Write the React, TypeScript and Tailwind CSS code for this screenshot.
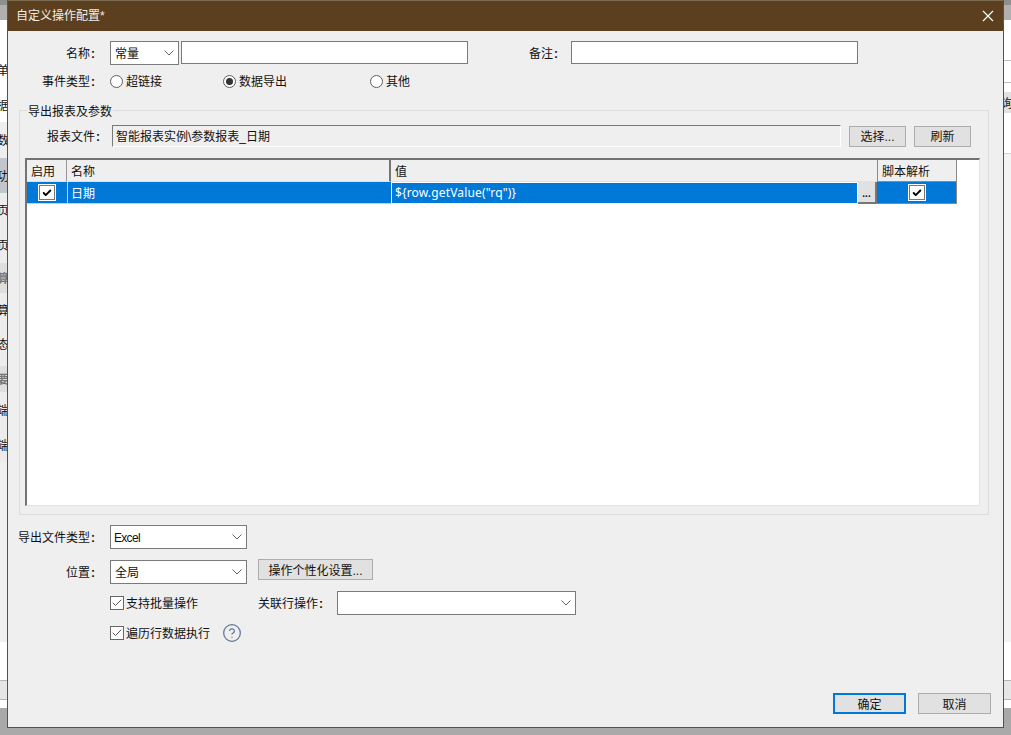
import type { ReactNode } from 'react'
import { Check, CircleHelp } from 'lucide-react'

const FONT = "font-['Liberation_Sans','Noto_Sans_CJK_SC',sans-serif]"

function Chevron() {
  return (
    <svg width="10" height="6" viewBox="0 0 10 6" className="shrink-0">
      <path d="M0.5 0.5 L5 5 L9.5 0.5" fill="none" stroke="#666" strokeWidth="1" />
    </svg>
  )
}

function Label({ text, className }: { text: string; className: string }) {
  return (
    <span className={`pt-[2px] whitespace-nowrap ${className}`}>
      {text}
      <span className="ml-[1px] font-bold">:</span>
    </span>
  )
}

function Select({ value, className }: { value?: string; className: string }) {
  return (
    <div className={`flex items-center justify-between border border-[#7a7a7a] bg-white px-[4px] h-[24px] ${className}`}>
      <span className="pt-[2px]">{value}</span>
      <Chevron />
    </div>
  )
}

function Radio({ checked, label, className }: { checked?: boolean; label: string; className: string }) {
  return (
    <div className={`flex items-center ${className}`}>
      <span className="flex items-center justify-center w-[13px] h-[13px] rounded-full border border-[#5f5f5f] bg-white mr-[3px]">
        {checked && <span className="w-[7px] h-[7px] rounded-full bg-[#333]" />}
      </span>
      <span className="pt-[2px]">{label}</span>
    </div>
  )
}

function Btn({ children, className }: { children: ReactNode; className: string }) {
  return (
    <div className={`flex items-center justify-center bg-[#e1e1e1] pt-[2px] h-[21px] ${className}`}>
      {children}
    </div>
  )
}

function SmallCheck({ label }: { label: string }) {
  return (
    <div className="flex items-center">
      <span className="flex items-center justify-center w-[14px] h-[14px] border border-[#666] bg-white mr-[2px]">
        <Check size={12} strokeWidth={2} color="#555" />
      </span>
      <span className="pt-[2px]">{label}</span>
    </div>
  )
}

function CellCheck() {
  return (
    <span className="flex items-center justify-center w-[18px] h-[17px] border-2 border-white bg-white outline-1 -outline-offset-2 outline-[#777]">
      <Check size={10} strokeWidth={4.5} color="#000" />
    </span>
  )
}

function Sliver({ text, className }: { text?: string; className: string }) {
  return (
    <div className={`flex items-center overflow-hidden whitespace-nowrap ${className}`}>
      {text && <span className="-ml-[3px] shrink-0 pt-[2px]">{text}</span>}
    </div>
  )
}

export default function App() {
  return (
    <div className={`relative w-[1011px] h-[735px] overflow-hidden bg-[#a9a9a9] text-[12px] leading-none text-[#111] ${FONT}`}>
      {/* page behind the dialog, left edge */}
      <div className="absolute left-0 top-0 w-[7px] h-[708px] flex flex-col">
        <Sliver className="h-[5px] bg-[#8f8f8f]" />
        <Sliver className="h-[15px] bg-[#b0b0b0]" />
        <Sliver className="h-[32px] bg-white" />
        <Sliver text="单" className="h-[35px] bg-white" />
        <Sliver text="据" className="h-[35px] bg-white" />
        <Sliver text="数" className="h-[36px] bg-[#eeeeee]" />
        <Sliver text="功" className="h-[35px] bg-[#c2c5cb]" />
        <Sliver text="页" className="h-[34px] bg-[#ececec]" />
        <Sliver text="页" className="h-[36px] bg-[#ececec]" />
        <Sliver text="算" className="h-[30px] bg-[#dedede] text-[#777] font-bold" />
        <Sliver text="算" className="h-[33px] bg-[#ececec]" />
        <Sliver text="态" className="h-[36px] bg-[#ececec]" />
        <Sliver className="h-[4px] bg-[#ececec]" />
        <Sliver text="要" className="h-[26px] bg-[#dedede] text-[#777] font-bold" />
        <Sliver text="端" className="h-[36px] bg-[#ececec]" />
        <Sliver text="端" className="h-[34px] bg-[#ececec]" />
        <Sliver className="h-[180px] bg-[#f0f0f0]" />
        <Sliver className="h-[38px] bg-white" />
        <Sliver className="h-[20px] bg-[#e6e6e6] border-y border-[#b5b5b5]" />
        <Sliver className="h-[8px] bg-white" />
      </div>

      {/* page behind the dialog, right edge */}
      <div className="absolute right-0 top-0 w-[7px] h-[708px] flex flex-col">
        <Sliver className="h-[5px] bg-[#8f8f8f]" />
        <Sliver className="h-[15px] bg-[#b0b0b0]" />
        <Sliver className="h-[41px] bg-white border-b border-[#bdbdbd]" />
        <Sliver className="h-[22px] bg-white border-b border-[#bdbdbd]" />
        <Sliver className="h-[9px] bg-white" />
        <Sliver text="询" className="h-[21px] bg-[#e1e1e1]" />
        <Sliver className="h-[41px] bg-white border-b border-[#d5d5d5]" />
        <Sliver className="h-[488px] bg-[#f3f3f3]" />
        <Sliver className="h-[38px] bg-white" />
        <Sliver className="h-[20px] bg-[#e6e6e6] border-y border-[#b5b5b5]" />
        <Sliver className="h-[8px] bg-white" />
      </div>

      {/* dialog */}
      <div className="absolute left-[7px] top-0 w-[997px] h-[728px] flex flex-col bg-[#efefef] border-x border-b border-[#5f5138]">
        <div className="flex items-center justify-between h-[31px] shrink-0 bg-[#5b3f1f] border-t border-[#7a6a50] text-[#f2eee8] pl-[8px] pr-[9px]">
          <span>自定义操作配置*</span>
          <svg width="12" height="12" viewBox="0 0 12 12">
            <path d="M1 1 L11 11 M11 1 L1 11" stroke="#fff" strokeWidth="1.2" />
          </svg>
        </div>

        {/* name row */}
        <div className="flex items-center mt-[10px] h-[23px]">
          <Label text="名称" className="w-[90px] text-right pr-[3px]" />
          <Select value="常量" className="w-[69px] ml-[12px] h-[23px]" />
          <div className="w-[287px] h-[23px] ml-[2px] border border-[#7a7a7a] bg-white" />
          <Label text="备注" className="ml-[61px] w-[42px]" />
          <div className="w-[287px] h-[23px] border border-[#7a7a7a] bg-white" />
        </div>

        {/* event type */}
        <div className="flex items-center mt-[8px] h-[18px]">
          <Label text="事件类型" className="w-[90px] text-right pr-[3px]" />
          <Radio label="超链接" className="ml-[12px] w-[113px]" />
          <Radio checked label="数据导出" className="w-[147px]" />
          <Radio label="其他" className="" />
        </div>

        {/* group box */}
        <div className="relative mt-[20px] ml-[11px] w-[970px] h-[405px] border border-[#dcdcdc] pt-[14px] pl-[5px]">
          <span className="absolute left-[7px] -top-[5px] bg-[#efefef] px-[1px]">导出报表及参数</span>

          <div className="flex items-center h-[22px]">
            <Label text="报表文件" className="w-[82px] text-right pr-[7px]" />
            <div className="flex items-center w-[729px] h-[22px] ml-[5px] pt-[2px] border border-[#7a7a7a] border-r-white border-b-white pl-[3px]">
              智能报表实例\参数报表_日期
            </div>
            <Btn className="w-[57px] ml-[8px] border border-[#adadad]">选择...</Btn>
            <Btn className="w-[57px] ml-[8px] border border-[#adadad]">刷新</Btn>
          </div>

          {/* table */}
          <div className="mt-[11px] w-[955px] h-[348px] bg-white border-t-2 border-l-2 border-[#737373] border-r border-r-[#e3e3e3] border-b border-b-[#e3e3e3]">
            <div className="flex h-[22px]">
              <div className="flex items-center w-[40px] pl-[4px] pt-[2px] bg-[#efefef] border-r border-b border-r-[#999] border-b-[#e0e0e0]">启用</div>
              <div className="flex items-center w-[324px] pl-[4px] pt-[2px] bg-[#efefef] border-r-2 border-b border-r-[#777] border-b-[#e0e0e0]">名称</div>
              <div className="flex items-center w-[486px] pl-[4px] pt-[2px] bg-[#efefef] border-b border-b-[#e0e0e0]">值</div>
              <div className="flex items-center w-[80px] pl-[4px] pt-[2px] bg-[#efefef] border border-t-0 border-[#8a8a8a]">脚本解析</div>
            </div>
            <div className="flex h-[22px]">
              <div className="flex items-center justify-center w-[40px] bg-[#0078d7] border-b border-[#cfcfcf]">
                <CellCheck />
              </div>
              <div className="flex items-center w-[324px] pl-[3px] pt-[2px] bg-[#0078d7] text-white border-l border-b border-[#cfcfcf]">日期</div>
              <div className="flex items-center w-[467px] pl-[3px] bg-[#0078d7] text-white border border-white tracking-[0.15px] font-['Noto_Sans',sans-serif]">
                {'${row.getValue("rq")}'}
              </div>
              <div className="flex items-center justify-center w-[19px] pt-[3px] bg-[#e1e1e1] border-r-2 border-b-2 border-[#777] font-bold text-[10px]">...</div>
              <div className="flex items-center justify-center w-[80px] bg-[#0078d7] border-r border-b border-[#8a8a8a]">
                <CellCheck />
              </div>
            </div>
          </div>
        </div>

        {/* export type */}
        <div className="flex items-center mt-[10px] h-[24px]">
          <Label text="导出文件类型" className="w-[90px] pl-[10px]" />
          <Select value="Excel" className="w-[137px] ml-[12px] pl-[3px] tracking-[-0.7px]" />
        </div>

        {/* position */}
        <div className="flex items-start mt-[11px] h-[24px]">
          <Label text="位置" className="w-[90px] text-right pr-[3px] self-center" />
          <Select value="全局" className="w-[137px] ml-[12px]" />
          <Btn className="w-[115px] ml-[11px] -mt-[1px] border border-[#adadad]">操作个性化设置...</Btn>
        </div>

        <div className="flex items-center mt-[7px] h-[24px] pl-[102px]">
          <div className="w-[148px]">
            <SmallCheck label="支持批量操作" />
          </div>
          <Label text="关联行操作" className="w-[79px]" />
          <Select className="w-[239px]" />
        </div>

        <div className="flex items-center mt-[7px] h-[22px] pl-[102px]">
          <SmallCheck label="遍历行数据执行" />
          <CircleHelp size={20} strokeWidth={1.5} color="#5f7595" className="ml-[12px]" />
        </div>

        <div className="mt-auto mb-[13px] flex justify-end pr-[12px] gap-[12px]">
          <Btn className="w-[73px] border-2 border-[#0078d7]">确定</Btn>
          <Btn className="w-[73px] border border-[#adadad]">取消</Btn>
        </div>
      </div>
    </div>
  )
}
